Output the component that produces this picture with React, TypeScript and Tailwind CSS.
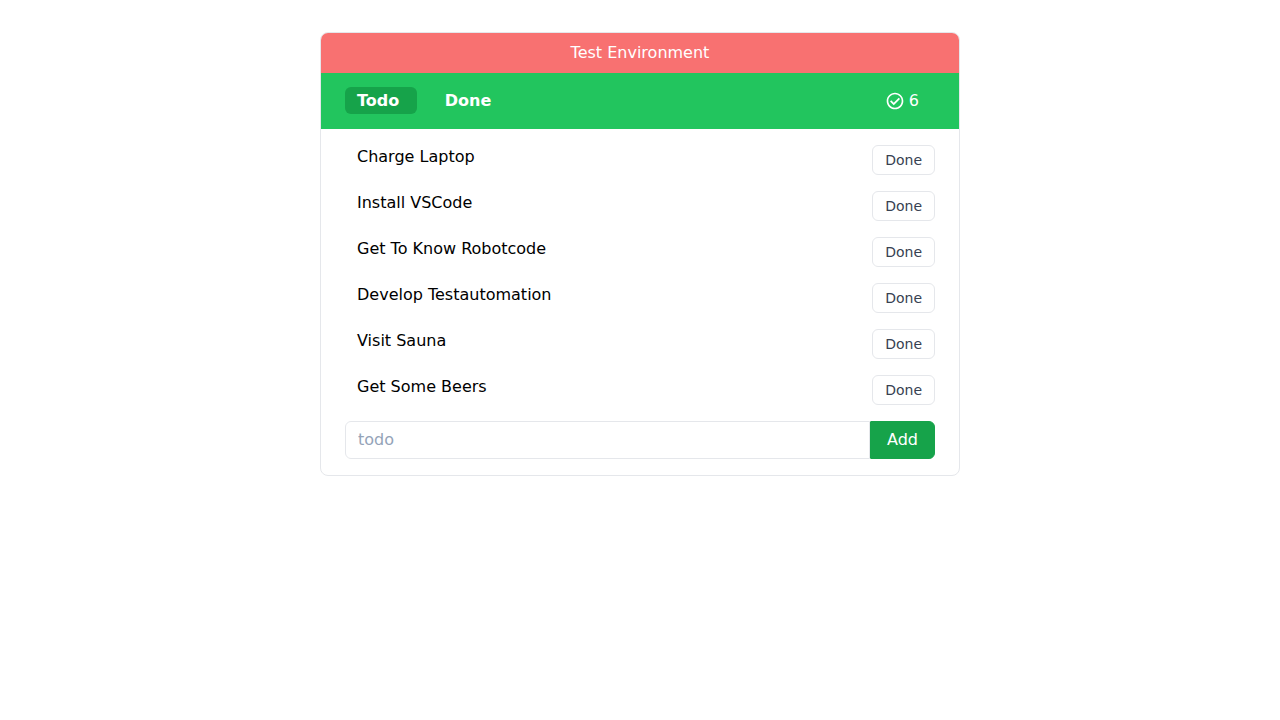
import { useState } from "react";

const todos = [
  "Charge Laptop",
  "Install VSCode",
  "Get To Know Robotcode",
  "Develop Testautomation",
  "Visit Sauna",
  "Get Some Beers",
];

function CheckCircle() {
  return (
    <svg className="h-5 w-5" fill="currentColor" viewBox="0 0 24 24" aria-hidden="true">
      <path d="M10.5 17l7.5-7.5-1.5-1.5-6 6-3-3L6 12.5zM12 2C6.48 2 2 6.48 2 12s4.48 10 10 10 10-4.48 10-10S17.52 2 12 2zm0 18c-4.42 0-8-3.58-8-8s3.58-8 8-8 8 3.58 8 8-3.58 8-8 8z" />
    </svg>
  );
}

export default function App() {
  const [text, setText] = useState("");
  return (
    <main className="px-4 py-8 font-['DejaVu_Sans',sans-serif] text-base text-black">
      <section className="mx-auto w-full max-w-screen-sm overflow-hidden rounded-lg border border-[#e5e7eb]">
        <div className="bg-[#f87171] p-2 text-center text-white">Test Environment</div>
        <header className="flex h-14 items-center justify-between bg-[#22c55e] px-6 text-white">
          <nav className="font-bold whitespace-pre">
            <a href="#todo" className="mr-4 rounded-md bg-[#16a34a] px-3 py-1">{"Todo "}</a>
            <a href="#done" className="rounded-md px-3 py-1">Done</a>
          </nav>
          <div className="flex items-center gap-1 pr-4">
            <CheckCircle />
            <span>6</span>
          </div>
        </header>
        <div className="px-6 py-4">
          <ul>
            {todos.map((todo) => (
              <li key={todo} className="mb-4 flex items-start justify-between">
                <span className="pl-3">{todo}</span>
                <button type="button" className="rounded-md border border-[#e5e7eb] px-3 py-1 text-sm text-[#374151]">
                  Done
                </button>
              </li>
            ))}
          </ul>
          <form className="flex" onSubmit={(e) => e.preventDefault()}>
            <input
              type="text"
              aria-label="todo"
              placeholder="todo"
              value={text}
              onChange={(e) => setText(e.target.value)}
              className="min-w-0 flex-1 rounded-l-md border border-[#e5e7eb] px-3 py-2 leading-tight placeholder:text-[#94a3b8]"
            />
            <button type="submit" className="rounded-l-[1px] rounded-r-md border border-[#16a34a] bg-[#16a34a] px-4 text-white">
              Add
            </button>
          </form>
        </div>
      </section>
    </main>
  );
}
